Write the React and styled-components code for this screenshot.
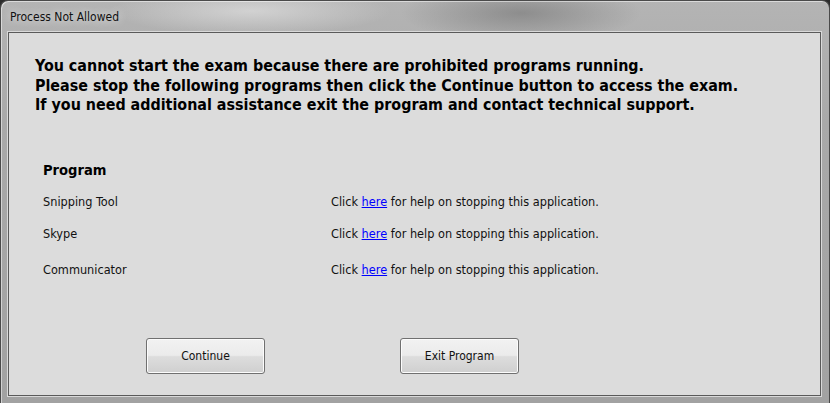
import React from 'react';
import styled, { createGlobalStyle } from 'styled-components';

const GlobalStyle = createGlobalStyle`
  html, body {
    margin: 0;
    padding: 0;
    background: #2b2b2b;
  }
  body {
    font-family: "DejaVu Sans", Tahoma, sans-serif;
  }
`;

const Frame = styled.div`
  width: 830px;
  height: 403px;
  box-sizing: border-box;
  display: flex;
  flex-direction: column;
  padding: 0 8px 7px 7px;
  border-radius: 8px 8px 0 0;
  border: 1px solid #4a4a4a;
  border-bottom: none;
  background:
    radial-gradient(ellipse 120px 30px at 520px 12px, rgba(110, 110, 110, 0.55), transparent),
    radial-gradient(ellipse 140px 24px at 250px 10px, rgba(230, 230, 230, 0.6), transparent),
    linear-gradient(180deg, #b4b4b4 0%, #a9a9a9 30%, #a2a2a2 100%);
  box-shadow: inset 1px 1px 0 rgba(255, 255, 255, 0.5);
`;

const TitleBar = styled.div`
  height: 30px;
  flex: none;
  display: flex;
  align-items: center;
  padding-left: 2px;
  padding-top: 1px;
  font-family: "DejaVu Sans Condensed", "DejaVu Sans", sans-serif;
  font-size: 12px;
  color: #111;
  text-shadow: 0 0 8px rgba(255, 255, 255, 0.9);
`;

const Client = styled.div`
  flex: 1;
  background: #dcdcdc;
  border: 1px solid #5a5a5a;
  box-shadow: 0 0 0 1px #d9d9d9;
  display: flex;
  flex-direction: column;
  padding: 23px 0 0 26px;
`;

const Heading = styled.div`
  font-family: "DejaVu Sans Condensed", "DejaVu Sans", sans-serif;
  font-weight: bold;
  font-size: 15.9px;
  line-height: 19.5px;
  color: #000;
`;

const Table = styled.div`
  margin-top: 40px;
  padding-left: 8px;
  display: grid;
  grid-template-columns: 288px 1fr;
  font-family: "DejaVu Sans Condensed", "DejaVu Sans", sans-serif;
  font-size: 12.6px;
  color: #111;
`;

const ColHead = styled.div`
  grid-column: 1 / 3;
  font-weight: bold;
  font-size: 14.6px;
  color: #000;
  height: 30px;
  display: flex;
  align-items: center;
`;

const Cell = styled.div`
  height: ${({ h }) => h}px;
  display: flex;
  align-items: center;
`;

const Link = styled.a`
  color: #0000ff;
  text-decoration: underline;
  cursor: pointer;
`;

const Buttons = styled.div`
  margin-top: 47px;
  padding-left: 111px;
  display: flex;
  gap: 135px;
`;

const Button = styled.button`
  width: 119px;
  height: 36px;
  border: 1px solid #707070;
  border-radius: 3px;
  background: linear-gradient(180deg, #f2f2f2 0%, #ebebeb 48%, #dddddd 52%, #cfcfcf 100%);
  box-shadow: inset 0 0 0 1px #fcfcfc;
  font-family: "DejaVu Sans Condensed", "DejaVu Sans", sans-serif;
  font-size: 12px;
  color: #111;
  padding: 0;
`;

const rows = [
  { name: 'Snipping Tool', h: 34 },
  { name: 'Skype', h: 30 },
  { name: 'Communicator', h: 42 },
];

export default function App() {
  return (
    <>
      <GlobalStyle />
      <Frame>
        <TitleBar>Process Not Allowed</TitleBar>
        <Client>
          <Heading>
            You cannot start the exam because there are prohibited programs running.
            <br />
            Please stop the following programs then click the Continue button to access the exam.
            <br />
            If you need additional assistance exit the program and contact technical support.
          </Heading>
          <Table>
            <ColHead>Program</ColHead>
            {rows.map((r) => (
              <React.Fragment key={r.name}>
                <Cell h={r.h}>{r.name}</Cell>
                <Cell h={r.h}>
                  Click&nbsp;<Link>here</Link>&nbsp;for help on stopping this application.
                </Cell>
              </React.Fragment>
            ))}
          </Table>
          <Buttons>
            <Button>Continue</Button>
            <Button>Exit Program</Button>
          </Buttons>
        </Client>
      </Frame>
    </>
  );
}
